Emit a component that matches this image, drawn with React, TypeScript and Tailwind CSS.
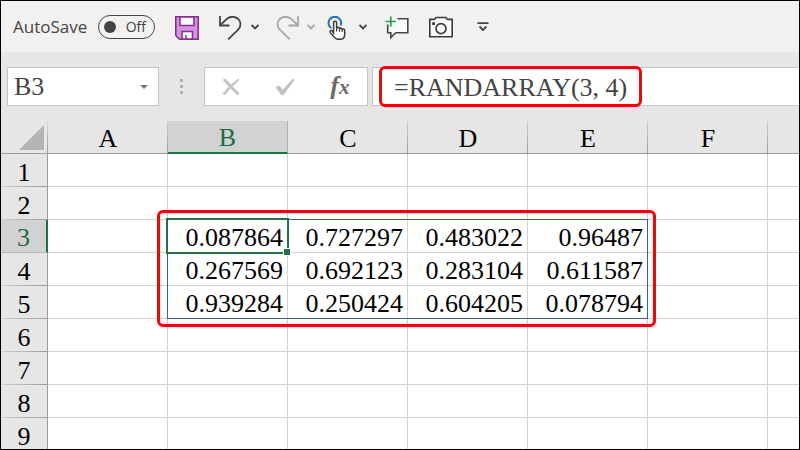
import { useState } from 'react';

const columns = ['A', 'B', 'C', 'D', 'E', 'F', ''];
const rows = [1, 2, 3, 4, 5, 6, 7, 8, 9];

const cells: Record<string, string> = {
  B3: '0.087864', C3: '0.727297', D3: '0.483022', E3: '0.96487',
  B4: '0.267569', C4: '0.692123', D4: '0.283104', E4: '0.611587',
  B5: '0.939284', C5: '0.250424', D5: '0.604205', E5: '0.078794',
};

const Chevron = () => (
  <svg viewBox="0 0 8 6" className="-mt-[2px] h-[6px] w-2" fill="none" stroke="currentColor" strokeWidth="1.9">
    <path d="M0.5 1L4 4.5L7.5 1" />
  </svg>
);

const SaveIcon = () => (
  <svg viewBox="0 0 24 24" className="size-6">
    <path d="M0.8 0.8H23.2V23.2H4.5L0.8 19.5Z" fill="#d694e0" stroke="#86308f" strokeWidth="1.6" />
    <path d="M5 1H19V9.5H5Z" fill="#fafafa" stroke="#86308f" strokeWidth="1.6" />
    <path d="M7 23V15.5H17.5V23Z" fill="#fafafa" stroke="#86308f" strokeWidth="1.6" />
    <path d="M11 19V23" stroke="#86308f" strokeWidth="1.4" />
  </svg>
);

const UndoIcon = () => (
  <svg viewBox="0 0 24 24" className="size-6" fill="none" stroke="currentColor" strokeWidth="1.8">
    <path d="M1 0V9.5H10.5" />
    <path d="M1.3 9.2L7.2 3.3C10.5 0 15.7 0 18.9 2.7C22.3 5.9 22.3 10.7 18.9 13.9L9.2 23.3" />
  </svg>
);

const TouchIcon = () => (
  <svg viewBox="0 0 24 24" className="size-6">
    <path d="M4.2 12.2A6.3 6.3 0 1 1 13.6 9.5" fill="none" stroke="#1a6fba" strokeWidth="1.9" />
    <path
      d="M6.6 17V6.7C6.6 4.6 9.6 4.6 9.6 6.7V12.2C10.3 10.9 12.3 11.1 12.5 12.7C13.3 11.7 15 12 15.2 13.4C16.2 12.7 17.7 13.3 17.7 14.7V18.3C17.7 21.3 15.8 23.3 13 23.3H11.3C9.2 23.3 8 22.4 6.9 20.9L3.5 16.6C2.5 15.2 4.2 13.7 5.4 15.1Z"
      fill="#fff"
      stroke="#3b3b3b"
      strokeWidth="1.5"
    />
    <path d="M9.6 12V15.5M12.5 12.7V15.7M15.2 13.4V16" stroke="#3b3b3b" strokeWidth="1.2" />
  </svg>
);

const CommentIcon = () => (
  <svg viewBox="0 0 24 24" className="size-6">
    <path d="M11 3H22.3V17H11L5.8 21.8V17H2.7V11H9Z" fill="#fafafa" />
    <path d="M12.5 2.7H22.8V16.8H10.8L5.8 21.7V16.8H2.7V8.5" fill="none" stroke="#444" strokeWidth="1.6" />
    <path d="M5.8 0.5V10.5M0.5 5.5H11" stroke="#2f9e50" strokeWidth="1.7" />
  </svg>
);

const CameraIcon = () => (
  <svg viewBox="0 0 24 24" className="size-6">
    <path d="M0.8 3.4H5.4L7.2 1.5H16.8L18.6 3.4H23.2V20.8H0.8Z" fill="#fafafa" stroke="#3b3b3b" strokeWidth="1.6" />
    <circle cx="12" cy="12.6" r="5" fill="none" stroke="#3b3b3b" strokeWidth="1.7" />
    <path d="M3.2 6.2H6V9H3.2Z" fill="#3b3b3b" />
  </svg>
);

function QuickAccessBar() {
  const [autoSave, setAutoSave] = useState(false);

  return (
    <header className="flex h-[51px] shrink-0 items-center bg-[#f2f1f0] pl-3 text-[#444]">
      <span id="autosave" className="w-[77px] font-['Open_Sans',sans-serif] text-[17px] leading-6">AutoSave</span>
      <button
        type="button"
        role="switch"
        aria-checked={autoSave}
        aria-labelledby="autosave"
        onClick={() => setAutoSave(!autoSave)}
        className="ml-2 flex h-6 w-[57px] items-center justify-between rounded-full border border-[#444] pr-2 pl-[5px] font-['Open_Sans',sans-serif] text-[14px] leading-5"
      >
        <span className="size-3 rounded-full bg-[#444]" />
        {autoSave ? 'On' : 'Off'}
      </button>
      <button type="button" aria-label="Save" className="ml-5 pt-[2px]"><SaveIcon /></button>
      <button type="button" aria-label="Undo" className="ml-5 flex items-center gap-2 pt-[2px]">
        <UndoIcon />
        <Chevron />
      </button>
      <button type="button" aria-label="Redo" className="ml-4 flex items-center gap-2 pt-[2px] text-[#a6a6a6]">
        <span className="-scale-x-100"><UndoIcon /></span>
        <Chevron />
      </button>
      <button type="button" aria-label="Touch mode" className="ml-3 flex items-center gap-2 pt-[2px]">
        <TouchIcon />
        <Chevron />
      </button>
      <button type="button" aria-label="New comment" className="ml-[18px] pt-[2px]"><CommentIcon /></button>
      <button type="button" aria-label="Camera" className="ml-5 pt-[2px]"><CameraIcon /></button>
      <button type="button" aria-label="Customize toolbar" className="ml-6">
        <svg viewBox="0 0 12 10" className="h-[10px] w-3" fill="none" stroke="currentColor" strokeWidth="1.8">
          <path d="M0.5 1.2H11.5M2.5 4.5L6 8L9.5 4.5" />
        </svg>
      </button>
    </header>
  );
}

function FormulaBar() {
  const [name, setName] = useState('B3');
  const [formula, setFormula] = useState('=RANDARRAY(3, 4)');

  return (
    <div className="flex h-[69px] shrink-0 items-start bg-[#e6e6e6] pt-[15px] pl-[6px] text-[#444]">
      <div className="flex h-[39px] w-[152px] items-center border border-[#c6c6c6] bg-white">
        <input
          aria-label="Name box"
          value={name}
          onChange={(e) => setName(e.target.value)}
          className="h-full w-full min-w-0 pl-[6px] text-[26px] outline-none"
        />
        <button type="button" aria-label="Named ranges" className="pr-[10px]">
          <svg viewBox="0 0 8 4" className="h-1 w-2"><path d="M0 0H8L4 4Z" fill="#777" /></svg>
        </button>
      </div>
      <div className="flex h-[39px] w-[45px] flex-col items-center justify-center gap-[3px]">
        <span className="size-[3px] bg-[#b0b0b0]" />
        <span className="size-[3px] bg-[#b0b0b0]" />
        <span className="size-[3px] bg-[#b0b0b0]" />
      </div>
      <div className="flex h-[39px] w-[164px] items-center justify-around border border-[#c6c6c6] bg-white">
        <button type="button" aria-label="Cancel">
          <svg viewBox="0 0 18 18" className="size-[18px]" fill="#c3c3c3">
            <path d="M0.6 1.8L3.2 0.4L9 6.4L16 0.8L17.6 1.6L10.6 8.4L17.7 15.5L15.4 17.4L8.6 10.6L2.8 17.2L0.2 15.8L6.9 8.8Z" />
          </svg>
        </button>
        <button type="button" aria-label="Enter">
          <svg viewBox="0 0 20 18" className="h-[18px] w-5" fill="#c3c3c3">
            <path d="M0.5 9.5L3.8 7.2L7.8 11.6L17.6 0.8L19.7 1.8L8.5 17.2L6.1 16.8Z" />
          </svg>
        </button>
        <button type="button" aria-label="Insert function" className="font-bold text-[#6a6a6a] italic">
          <span className="text-[26px] leading-8">f</span>
          <span className="text-[21px]">x</span>
        </button>
      </div>
      <div className="relative ml-1 h-[39px] flex-1 border border-r-0 border-[#c6c6c6] bg-white">
        <input
          aria-label="Formula bar"
          value={formula}
          onChange={(e) => setFormula(e.target.value)}
          className="h-full w-full pt-[2px] pl-[21px] text-[26px] outline-none"
        />
        <div className="pointer-events-none absolute -top-[2px] left-[6px] h-[41px] w-[263px] rounded-md border-3 border-[#e60b0b]" />
      </div>
    </div>
  );
}

function Sheet() {
  return (
    <div className="relative">
      <table className="w-full table-fixed border-separate border-spacing-0 text-[26px] leading-[29px] text-black">
        <colgroup>
          <col className="w-[47px]" />
          {columns.map((col) => (
            <col key={col} className={col ? 'w-[120px]' : ''} />
          ))}
        </colgroup>
        <thead>
          <tr className="h-[33px]">
            <th className="border-b border-[#9c9c9c] bg-[#e6e6e6] bg-[linear-gradient(#d9d9d9,#999)] bg-[length:1px_100%] bg-right bg-no-repeat p-0">
              <button type="button" aria-label="Select all" className="ml-auto block pr-1">
                <svg viewBox="0 0 25 25" className="size-[25px]"><path d="M25 0V25H0Z" fill="#b4b4b4" /></svg>
              </button>
            </th>
            {columns.map((col) => (
              <th
                key={col}
                className={
                  col === 'B'
                    ? 'border-r border-b-2 border-r-[#b0b0b0] border-b-[#217346] bg-[#d2d2d2] p-0 pt-[2px] font-normal text-[#1f6b42]'
                    : 'border-b border-[#9c9c9c] bg-[#e6e6e6] bg-[linear-gradient(#d0d0d0,#999)] bg-[length:1px_100%] bg-right bg-no-repeat p-0 pt-[2px] font-normal last:bg-none'
                }
              >
                {col}
              </th>
            ))}
          </tr>
        </thead>
        <tbody>
          {rows.map((row) => (
            <tr key={row} className="h-[33px]">
              <th
                className={
                  row === 3
                    ? 'border-r-2 border-b border-r-[#217346] border-b-[#b8b8b8] bg-[#d2d2d2] p-0 pt-[3px] font-normal text-[#1f6b42]'
                    : 'border-r border-[#999] bg-[#e6e6e6] bg-[linear-gradient(to_right,#d0d0d0,#999)] bg-[length:100%_1px] bg-bottom bg-no-repeat p-0 pt-[3px] font-normal'
                }
              >
                {row}
              </th>
              {columns.map((col) => (
                <td key={col} className="border-r border-b border-[#d2d2d2] bg-white p-0 pt-[3px] pr-1 text-right last:border-r-0">
                  {cells[col + row]}
                </td>
              ))}
            </tr>
          ))}
        </tbody>
      </table>
      {/* spill range, active cell and highlight */}
      <div className="pointer-events-none absolute top-[98px] left-[166px] h-[100px] w-[481px] border border-[#3a5f9b]" />
      <div className="pointer-events-none absolute top-[97px] left-[165px] h-9 w-[123px] border-2 border-[#217346]">
        <span className="absolute -right-[4px] -bottom-[4px] size-2 border border-white bg-[#217346]" />
      </div>
      <div className="pointer-events-none absolute top-[89px] left-[156px] h-[117px] w-[499px] rounded-md border-3 border-[#e60b0b] shadow-[inset_0_0_4px_rgba(0,0,0,0.15)]" />
    </div>
  );
}

export default function App() {
  return (
    <div className="flex h-screen flex-col overflow-hidden border border-black bg-white font-['Liberation_Serif',serif]">
      <QuickAccessBar />
      <FormulaBar />
      <main className="min-h-0 flex-1 overflow-hidden">
        <Sheet />
      </main>
    </div>
  );
}
